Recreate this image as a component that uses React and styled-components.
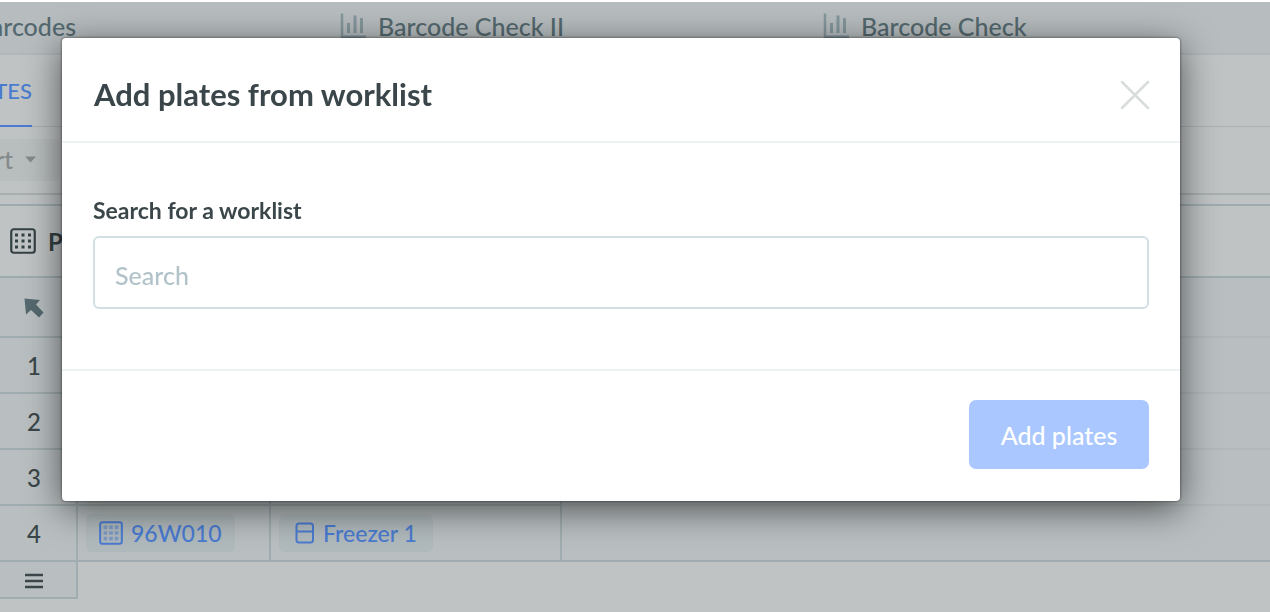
import React from 'react'
import styled, { createGlobalStyle } from 'styled-components'

const GlobalStyle = createGlobalStyle`
    * {
        box-sizing: border-box;
    }
    body {
        margin: 0;
        background-color: #bfc3c4;
        font-family: Lato, 'Open Sans', sans-serif;
        font-weight: 500;
        color: #3a4649;
        overflow: hidden;
    }
`
const Page = styled.div`
    min-height: 100vh;
    border-top: 2px solid #ffffff;
`
const FileTabs = styled.nav`
    display: flex;
    height: 53px;
    background-color: #b7bdbf;
    border-bottom: 2px solid #afb8ba;
    overflow: hidden;
`
const FileTab = styled.a`
    flex: 0 0 ${props => (props.$cut ? '76px' : '483px')};
    display: flex;
    align-items: center;
    justify-content: ${props => (props.$cut ? 'flex-end' : 'flex-start')};
    gap: 12px;
    min-width: 0;
    height: 47px;
    margin-right: ${props => (props.$cut ? '264px' : '0')};
    font-size: 25px;
    white-space: nowrap;
    text-decoration: none;
    color: #54696f;
`
const ViewTabs = styled.nav`
    display: flex;
    height: 72px;
    border-bottom: 1px solid #a9b1b4;
`
const ViewTab = styled.a`
    display: flex;
    align-items: center;
    justify-content: flex-end;
    width: 32px;
    height: 72px;
    border-bottom: 2px solid #4a7bd0;
    font-size: 22px;
    text-decoration: none;
    color: #4a7bd0;
`
const Toolbar = styled.div`
    display: flex;
    align-items: center;
    height: 68px;
    border-bottom: 2px solid #a8afb1;
`
const ImportButton = styled.button`
    display: flex;
    align-items: center;
    justify-content: flex-end;
    gap: 12px;
    width: 60px;
    height: 42px;
    padding: 0 24px 2px 0;
    border: none;
    border-radius: 0 4px 4px 0;
    background-color: #b8bdbe;
    font-family: inherit;
    font-size: 24px;
    font-weight: 500;
    color: #84898a;

    svg {
        flex-shrink: 0;
    }
`
const TableTitle = styled.div`
    display: flex;
    align-items: center;
    gap: 12px;
    height: 74px;
    margin-top: 9px;
    padding-left: 10px;
    border-top: 2px solid #9eabae;
    border-bottom: 2px solid #9eabae;
    font-size: 24px;
    font-weight: 700;
    color: #344144;
`
const Table = styled.table`
    width: 100%;
    border-collapse: separate;
    border-spacing: 0;
    table-layout: fixed;
`
const Col = styled.col`
    width: ${props => props.$width};
`
const Row = styled.tr`
    height: ${props => props.$height};
`
const RowHead = styled.th`
    padding: 2px 8px 0 0;
    border-right: 2px solid #a0acaf;
    border-bottom: 2px solid #a0acaf;
    background-color: #b9bfc1;
    font-size: 24px;
    font-weight: 500;
    line-height: 28px;
    text-align: center;
    vertical-align: middle;

    svg {
        display: block;
        margin: 0 auto;
    }
`
const Cell = styled.td`
    padding: 0 8px;
    border-right: 2px solid #a0acaf;
    border-bottom: 2px solid #a0acaf;
    background-color: #b9bfc1;
`
const WideCell = styled.td`
    padding: 0;
    border-bottom: ${props => (props.$last ? '2px solid #a0acaf' : '2px solid #b1b8ba')};
    background-color: #b9bfc1;
`
const Chip = styled.a`
    display: inline-flex;
    align-items: center;
    gap: 8px;
    height: 38px;
    padding: 0 ${props => (props.$wide ? '16px' : '13px')};
    border-radius: 6px;
    background-color: #b0b9bc;
    font-size: 23px;
    white-space: nowrap;
    text-decoration: none;
    vertical-align: middle;
    color: #4a7bd0;
`
const Backdrop = styled.div`
    position: fixed;
    inset: 0;
    padding: 38px 90px 0 62px;
`
const Modal = styled.section`
    border-radius: 4px;
    background-color: #ffffff;
    box-shadow: 0 8px 36px rgba(0, 0, 0, 0.6), 0 0 3px rgba(0, 0, 0, 0.6);
`
const ModalHeader = styled.header`
    display: flex;
    align-items: center;
    justify-content: space-between;
    height: 105px;
    padding: 8px 30px 0 32px;
    border-bottom: 2px solid #edf3f3;
`
const Title = styled.h1`
    margin: 0;
    font-size: 31px;
    font-weight: 700;
    line-height: 32px;
`
const CloseButton = styled.button`
    display: flex;
    padding: 2px 0 0;
    border: none;
    background: none;
    color: #d9dcdd;
`
const ModalBody = styled.div`
    display: flex;
    flex-direction: column;
    gap: 12px;
    padding: 53px 31px 60px;
`
const Label = styled.label`
    font-size: 23px;
    font-weight: 700;
    line-height: 28px;
`
const SearchInput = styled.input`
    width: 100%;
    height: 73px;
    padding: 4px 20px 0;
    border: 2px solid #d3dfe4;
    border-radius: 6px;
    background-color: #ffffff;
    font-family: inherit;
    font-size: 25px;
    font-weight: 500;
    color: #3a4649;

    &::placeholder {
        color: #b1c3c9;
        opacity: 1;
    }
`
const ModalFooter = styled.footer`
    display: flex;
    justify-content: flex-end;
    padding: 29px 31px 32px;
    border-top: 2px solid #edf3f3;
`
const AddButton = styled.button`
    width: 180px;
    height: 69px;
    padding: 0;
    border: none;
    border-radius: 7px;
    background-color: #aac8ff;
    font-family: inherit;
    font-size: 25px;
    font-weight: 500;
    color: #ffffff;
`

const ChartIcon = () => (
    <svg width="26" height="26" viewBox="0 0 26 26" fill="none" stroke="#84979d">
        <path d="M2 0.5V25" strokeWidth="2.5" />
        <path d="M1 24H26" strokeWidth="3" />
        <path d="M8.5 10V20M15 2.5V20M21.5 5V20" strokeWidth="3" />
    </svg>
)

const PlateIcon = ({ size, dotOpacity = 1 }) => (
    <svg width={size} height={size} viewBox="0 0 26 26" fill="none" stroke="currentColor">
        <rect x="1.25" y="1.25" width="23.5" height="23.5" rx="2.5" strokeWidth="2.2" />
        <path
            d="M5 7H21M5 13H21M5 19H21"
            strokeWidth={dotOpacity < 1 ? 4 : 3}
            strokeDasharray={dotOpacity < 1 ? '4 2' : '3 3.5'}
            opacity={dotOpacity}
        />
    </svg>
)

const FreezerIcon = () => (
    <svg width="20" height="22" viewBox="0 0 20 22" fill="none" stroke="currentColor" strokeWidth="2">
        <rect x="1.5" y="1.5" width="16.5" height="19" rx="2.5" />
        <path d="M1.5 9.5H18" />
    </svg>
)

const ArrowIcon = () => (
    <svg width="20" height="20" viewBox="0 0 20 20" fill="#54696f">
        <path d="M0.5 0.5L16 2L12 6.5L19.5 14.5L15 19.5L7 12L2 16.5Z" />
    </svg>
)

const MenuIcon = () => (
    <svg width="18" height="16" viewBox="0 0 18 16" stroke="#3a4649" strokeWidth="2.5">
        <path d="M0 2H18M0 8H18M0 14H18" />
    </svg>
)

const App = () => {
  return (
    <>
        <GlobalStyle/>
        <Page>
            <FileTabs>
                <FileTab href="#" $cut>Barcodes</FileTab>
                <FileTab href="#"><ChartIcon/>Barcode Check II</FileTab>
                <FileTab href="#"><ChartIcon/>Barcode Check</FileTab>
            </FileTabs>
            <ViewTabs>
                <ViewTab href="#">PLATES</ViewTab>
            </ViewTabs>
            <Toolbar>
                <ImportButton>
                    Import
                    <svg width="11" height="7" viewBox="0 0 11 7" fill="currentColor">
                        <path d="M0 0.5H11L5.5 6.5Z" />
                    </svg>
                </ImportButton>
            </Toolbar>
            <TableTitle><PlateIcon size={26}/>Plates</TableTitle>
            <Table>
                <colgroup>
                    <Col $width="78px"/>
                    <Col $width="193px"/>
                    <Col $width="291px"/>
                    <Col $width="auto"/>
                </colgroup>
                <tbody>
                    <Row $height="60px">
                        <RowHead><ArrowIcon/></RowHead>
                        <Cell/>
                        <Cell/>
                        <WideCell/>
                    </Row>
                    {[1, 2, 3].map(n => (
                        <Row key={n} $height="56px">
                            <RowHead>{n}</RowHead>
                            <Cell/>
                            <Cell/>
                            <WideCell/>
                        </Row>
                    ))}
                    <Row $height="56px">
                        <RowHead>4</RowHead>
                        <Cell><Chip href="#"><PlateIcon size={24} dotOpacity={0.5}/>96W010</Chip></Cell>
                        <Cell><Chip href="#" $wide><FreezerIcon/>Freezer 1</Chip></Cell>
                        <WideCell $last/>
                    </Row>
                    <Row $height="37px">
                        <RowHead><MenuIcon/></RowHead>
                    </Row>
                </tbody>
            </Table>
        </Page>
        <Backdrop>
            <Modal role="dialog" aria-labelledby="modal-title">
                <ModalHeader>
                    <Title id="modal-title">Add plates from worklist</Title>
                    <CloseButton aria-label="Close">
                        <svg width="30" height="30" viewBox="0 0 30 30" stroke="currentColor" strokeWidth="2.5" strokeLinecap="round">
                            <path d="M2 2L28 28M28 2L2 28" />
                        </svg>
                    </CloseButton>
                </ModalHeader>
                <ModalBody>
                    <Label htmlFor="worklist">Search for a worklist</Label>
                    <SearchInput id="worklist" type="text" placeholder="Search"/>
                </ModalBody>
                <ModalFooter>
                    <AddButton>Add plates</AddButton>
                </ModalFooter>
            </Modal>
        </Backdrop>
    </>
  )
}

export default App
